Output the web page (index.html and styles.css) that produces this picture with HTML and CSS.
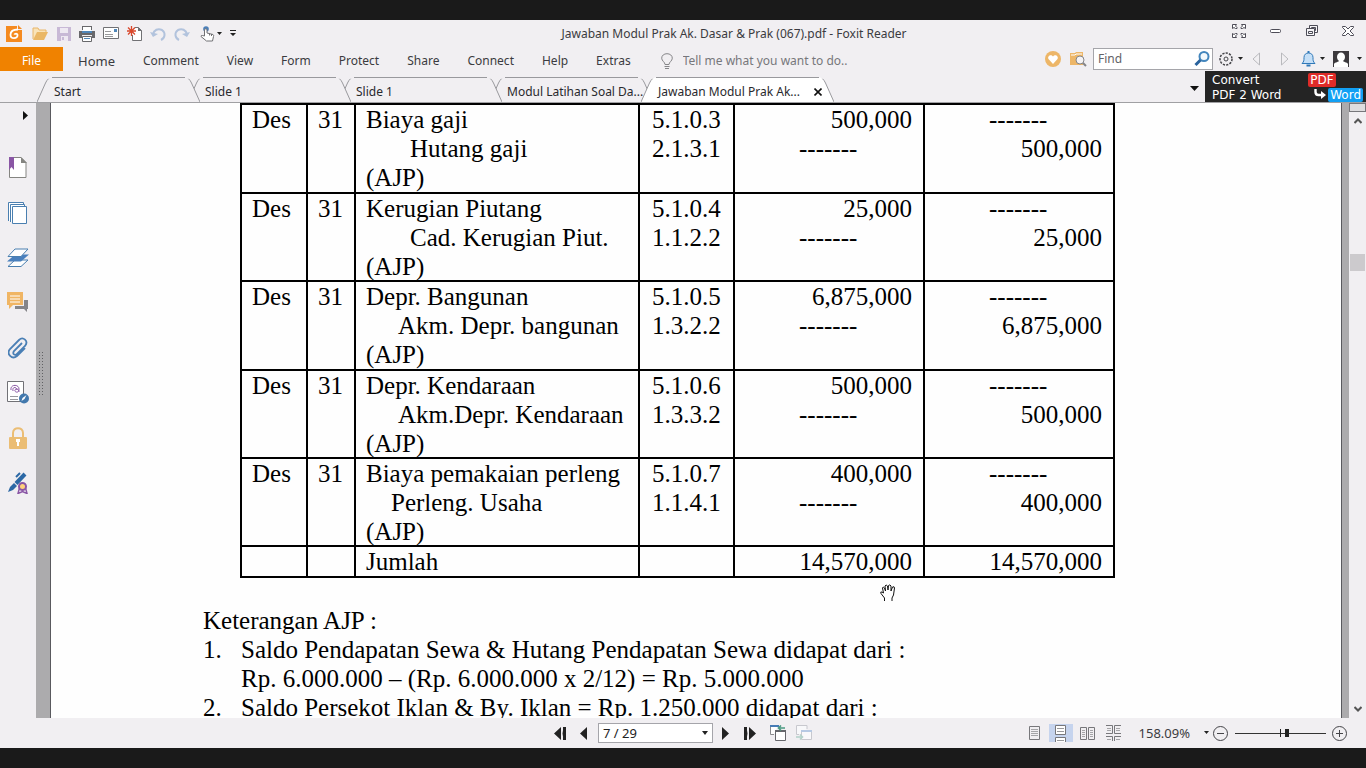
FILE: index.html
```html
<!DOCTYPE html>
<html lang="id">
<head>
<meta charset="utf-8">
<title>Jawaban Modul Prak Ak. Dasar &amp; Prak (067).pdf - Foxit Reader</title>
<link rel="stylesheet" href="styles.css">
</head>
<body>
<header class="titlebar">
  <div class="quick">
    <svg class="logo" width="17" height="17" viewBox="0 0 17 17"><path d="M0 1h11v4h5v12H0z" fill="#f58a1f"/><path d="M12 0l4 4h-4z" fill="#f58a1f"/><path d="M12 4.500C7.500 4.500 4.500 6.500 4.500 9.700c0 2.300 1.500 3.500 3.500 3.500 2.500 0 3.800-1.700 3.500-3.500-.4-1.500-2.500-1.500-3.200 0" fill="none" stroke="#fff" stroke-width="1.800"/></svg>
    <button aria-label="Open"><svg width="17" height="15" viewBox="0 0 17 15"><path d="M1 13V2h5l1 2h7v3" fill="#f9e3b8" stroke="#e8b66a"/><path d="M1 14l4-8h11l-4 8z" fill="#eab766"/></svg></button>
    <button aria-label="Save"><svg width="14" height="14" viewBox="0 0 14 14"><path d="M0 0h14v14H0z" fill="#c8b9d6"/><path d="M3 1h8v5H3zM4 9h7v5H4z" fill="#eee9f2"/><path d="M5 10h2v3H5z" fill="#c8b9d6"/></svg></button>
    <button aria-label="Print"><svg width="16" height="16" viewBox="0 0 16 16"><path d="M3 4V0h10v4M0 5h16v7h-3V9H3v3H0z" fill="#68686b"/><path d="M4 1h8v4H4z" fill="#fff"/><path d="M3 5h10v2H3z" fill="#5187b9"/><path d="M3.500 10.500h9v5h-9z" fill="#fff" stroke="#68686b"/><path d="M5 12.500h6" stroke="#5187b9"/></svg></button>
    <button aria-label="Email"><svg width="16" height="13" viewBox="0 0 16 13"><path d="M.5.5h15v11H.5z" fill="#fff" stroke="#717174"/><path d="M11 2h3v3h-3z" fill="#5187b9"/><path d="M2 4.500h6M2 7.500h8M2 9.500h8" stroke="#98989b"/></svg></button>
    <button aria-label="New"><svg width="15" height="15" viewBox="0 0 15 15"><path d="M5.500 9v5.500h9V4.500l-3-3H8" fill="#fff" stroke="#717174"/><path d="M11 1v4h4" fill="#717174"/><path d="M4.500 0v10M0 5h9M1 1.500l7 7M8 1.500l-7 7" stroke="#d9482c" stroke-width="1.300"/></svg></button>
    <button aria-label="Undo"><svg width="16" height="14" viewBox="0 0 16 14"><path d="M3 7c1-4 5-6 9-4 4 3 3 8-1 10" fill="none" stroke="#b2c3dd" stroke-width="2"/><path d="M0 5l3 5 5-3z" fill="#b2c3dd"/></svg></button>
    <button aria-label="Redo"><svg width="16" height="14" viewBox="0 0 16 14"><path d="M13 7c-1-4-5-6-9-4-4 3-3 8 1 10" fill="none" stroke="#b2c3dd" stroke-width="2"/><path d="M16 5l-3 5-5-3z" fill="#b2c3dd"/></svg></button>
    <button class="hand-tool" aria-label="Hand tool"><svg width="22" height="16" viewBox="0 0 22 16"><circle cx="6" cy="3" r="2.800" fill="#4b7fb8"/><path d="M4.500 10V3.500q1.500-1.500 2.500 0V7l6 1.500q1 .5.500 2L12.500 15h-6L1 10.500q0-1.500 1.500-1z" fill="#fff" stroke="#717174"/><path d="M9.500 7.500v2M11.500 8v2" stroke="#717174"/><path d="M17 6h5l-2.500 3z" fill="#222"/></svg></button>
    <button aria-label="Customize toolbar"><svg width="6" height="7" viewBox="0 0 6 7"><path d="M0 0h6v1H0zM0 3h6L3 6z" fill="#222"/></svg></button>
  </div>
  <h1 class="title">Jawaban Modul Prak Ak. Dasar &amp; Prak (067).pdf - Foxit Reader</h1>
  <div class="window-buttons">
    <button aria-label="Full screen"><svg width="14" height="14" viewBox="0 0 14 14" fill="#fff" stroke="#4e4d58"><path d="M.5.5h4l-1 1.500 1.500 1.500v1H3.500L2 3.500l-1.500 1zM13.500.5v4L12 3.500l-1.500 1H9v-1L10.500 2l-1-1.500zM.5 13.500v-4l1.500 1 1.500-1H5v1L3.500 12l1 1.500zM13.500 13.500v-4l-1.500 1-1.500-1H9v1l1.500 1.500-1 1.500z"/></svg></button>
    <button aria-label="Minimize"><svg width="12" height="14" viewBox="0 0 12 14"><rect x=".5" y="5.500" width="10" height="3" rx="1" fill="#fff" stroke="#4e4d58"/></svg></button>
    <button aria-label="Restore"><svg width="12" height="14" viewBox="0 0 12 14" fill="#f6f5f8" stroke="#4e4d58"><path d="M3.500 1.500h8v7h-8z"/><path d="M5.500 3.500h4v3h-4z"/><path d="M.5 4.500h8v7h-8z"/><path d="M2.500 7.500h4v2h-4z"/></svg></button>
    <button aria-label="Close"><svg width="12" height="14" viewBox="0 0 12 14"><path d="M.5 2.500h3L6 5l2.500-2.500h3v1L8 7l3.500 3.500v1h-3L6 9l-2.500 2.500h-3v-1L4 7 .5 3.500z" fill="#fff" stroke="#4e4d58"/></svg></button>
  </div>
</header>

<nav class="menubar">
  <button class="file">File</button>
  <div class="menus">
    <button class="home">Home</button>
    <button>Comment</button>
    <button>View</button>
    <button>Form</button>
    <button>Protect</button>
    <button>Share</button>
    <button>Connect</button>
    <button>Help</button>
    <button>Extras</button>
  </div>
  <label class="tell"><svg width="12" height="16" viewBox="0 0 12 16" fill="none" stroke="#858588"><path d="M4 11.500C4 9 .7 8 .7 5.200.7 2.500 3 .7 6 .7s5.300 1.800 5.300 4.500C11.300 8 8 9 8 11.500zM3.500 13.500h5M4 15.500h4"/></svg>
    <input type="text" placeholder="Tell me what you want to do.."></label>
  <div class="tools">
    <button aria-label="Favourites"><svg width="16" height="16" viewBox="0 0 16 16"><circle cx="8" cy="8" r="8" fill="#edb668"/><path d="M8 13L3.500 8C2 5 6 2.500 8 5.500 10 2.500 14 5 12.500 8z" fill="#fff"/></svg></button>
    <button class="folder-search" aria-label="Search folder"><svg width="17" height="16" viewBox="0 0 17 16"><path d="M0 2h5l1-1h7v13H0z" fill="#edb668"/><path d="M1 4h4l1-1h6" stroke="#fff" fill="none"/><circle cx="10" cy="9" r="4" fill="#f5f3f5" stroke="#858588"/><path d="M13 12l3 3" stroke="#858588" stroke-width="2"/></svg></button>
    <label class="find"><input type="text" placeholder="Find" aria-label="Find"><svg width="16" height="16" viewBox="0 0 16 16"><circle cx="10" cy="5.500" r="4.500" fill="#f3f9fd" stroke="#4386bd" stroke-width="2"/><path d="M6.500 9L1.500 14" stroke="#28629d" stroke-width="3"/></svg></label>
    <button class="gear" aria-label="Settings"><svg width="24" height="14" viewBox="0 0 24 14"><circle cx="7" cy="7" r="6" fill="none" stroke="#45454a" stroke-width="1.500" stroke-dasharray="2.200 1.200"/><circle cx="7" cy="7" r="2" fill="none" stroke="#45454a"/><path d="M19 5h5l-2.500 3z" fill="#222"/></svg></button>
    <button aria-label="Back"><svg width="8" height="14" viewBox="0 0 8 14"><path d="M7.500 1v12L1 7z" fill="none" stroke="#b9b9bd"/></svg></button>
    <button class="forward" aria-label="Forward"><svg width="8" height="14" viewBox="0 0 8 14"><path d="M.5 1v12L7 7z" fill="none" stroke="#b9b9bd"/></svg></button>
    <button class="bell" aria-label="Notifications"><svg width="24" height="16" viewBox="0 0 24 16"><path d="M1 12.500c2-2 2-3 2-6 0-3 2-4.500 4.500-4.500S12 3.500 12 6.500c0 3 0 4 2 6z" fill="#c5dff7" stroke="#2f78b8"/><path d="M7.500 0v2M5.500 14.500h4" stroke="#2f78b8" stroke-width="2"/><path d="M19 6h5l-2.500 3z" fill="#222"/></svg></button>
    <button class="account" aria-label="Account"><svg width="29" height="16" viewBox="0 0 29 16"><path d="M0 0h16v16H0z" fill="#3c393d"/><path d="M4 6c0-6 8-6 8 0 0 2-1 3-2 4 0 1 4 1 5 3v3H1v-3c1-2 5-2 5-3-1-1-2-2-2-4z" fill="#fff"/><path d="M24 6h5l-2.500 3z" fill="#222"/></svg></button>
  </div>
</nav>

<div class="tabbar">
  <div class="tabs">
    <button class="tab"><svg class="edge" width="15" height="25" viewBox="0 0 15 25"><path d="M0 25L8.500 6Q11 .5 15 .5V25z"/></svg><span>Start</span><svg class="edge" width="15" height="25" viewBox="0 0 15 25"><path d="M15 25L6.500 6Q4 .5 0 .5V25z"/></svg></button>
    <button class="tab"><svg class="edge" width="15" height="25" viewBox="0 0 15 25"><path d="M0 25L8.500 6Q11 .5 15 .5V25z"/></svg><span>Slide 1</span><svg class="edge" width="15" height="25" viewBox="0 0 15 25"><path d="M15 25L6.500 6Q4 .5 0 .5V25z"/></svg></button>
    <button class="tab"><svg class="edge" width="15" height="25" viewBox="0 0 15 25"><path d="M0 25L8.500 6Q11 .5 15 .5V25z"/></svg><span>Slide 1</span><svg class="edge" width="15" height="25" viewBox="0 0 15 25"><path d="M15 25L6.500 6Q4 .5 0 .5V25z"/></svg></button>
    <button class="tab"><svg class="edge" width="15" height="25" viewBox="0 0 15 25"><path d="M0 25L8.500 6Q11 .5 15 .5V25z"/></svg><span>Modul Latihan Soal Da...</span><svg class="edge" width="15" height="25" viewBox="0 0 15 25"><path d="M15 25L6.500 6Q4 .5 0 .5V25z"/></svg></button>
    <button class="tab active"><svg class="edge" width="15" height="25" viewBox="0 0 15 25"><path d="M0 25L8.500 6Q11 .5 15 .5V25z"/></svg><span>Jawaban Modul Prak Ak...<svg class="x" width="8" height="8" viewBox="0 0 8 8"><path d="M.5.5l7 7M7.500.5l-7 7" stroke="#111" stroke-width="1.600"/></svg></span><svg class="edge" width="15" height="25" viewBox="0 0 15 25"><path d="M15 25L6.500 6Q4 .5 0 .5V25z"/></svg></button>
  </div>
  <button class="tab-list" aria-label="List tabs"><svg width="9" height="5" viewBox="0 0 9 5"><path d="M0 0h9L4.500 5z" fill="#111"/></svg></button>
  <a class="ad" href="#"><span>Convert</span><b class="pdf">PDF</b><span>PDF 2 Word</span><span class="to"><svg width="12" height="11" viewBox="0 0 12 11"><path d="M1.500 0v3q0 3 3 3H8" fill="none" stroke="#fff" stroke-width="2.400"/><path d="M7 2l5 4-5 4z" fill="#fff"/></svg><b class="word">Word</b></span></a>
</div>

<main class="workspace">
  <aside class="panel">
    <button class="expand" aria-label="Expand panel"><svg width="6" height="9" viewBox="0 0 6 9"><path d="M0 0l5 4.500L0 9z" fill="#111"/></svg></button>
    <button aria-label="Bookmarks"><svg width="20" height="22" viewBox="0 0 20 22"><path d="M1.500.5H13l5 5v15H1.500z" fill="#fff" stroke="#858581"/><path d="M13 0v6h6z" fill="#858581"/><path d="M1 0h5v13l-2.500-3L1 13z" fill="#8a56a5"/></svg></button>
    <button aria-label="Pages"><svg width="20" height="22" viewBox="0 0 20 22" fill="#fff" stroke="#4a7fb0"><path d="M.5 19V.5h15V15"/><path d="M2.500 20V2.500h14V18"/><path d="M4.500 4.500h14v17h-14z"/></svg></button>
    <button aria-label="Layers"><svg width="22" height="20" viewBox="0 0 22 20"><path d="M1 18.500h13l7-6.500H8z" fill="#fff" stroke="#4a7fb0"/><path d="M0 13.500h14l8-7H8z" fill="#4a80bd"/><path d="M1 8.500h13L21 1H8z" fill="#fff" stroke="#4a7fb0"/></svg></button>
    <button aria-label="Comments"><svg width="22" height="21" viewBox="0 0 22 21"><path d="M17 8h4v9h-1v3l-3-3h-9v-3h9z" fill="#858589"/><path d="M0 0h16v13H6l-4 4v-4H0z" fill="#f0b564"/><path d="M3 4h10M3 7h10M3 10h10" stroke="#fff"/></svg></button>
    <button aria-label="Attachments"><svg width="20" height="22" viewBox="0 0 20 22" fill="none" stroke="#4a7fb5" stroke-width="1.800"><path d="M14 6L6 14c-2 3 1 5 3 3l8-8c4-5-2-10-6-6l-9 9c-4 5 2 11 7 7l8-8"/></svg></button>
    <button aria-label="Signatures"><svg width="22" height="23" viewBox="0 0 22 23"><path d="M.5.500h16v20H.5z" fill="#fff" stroke="#717176"/><path d="M4 9c-1-6 8-6 8-1s-5 3-4 1 4-1 4 2M6 10c-1-5 4-4 4-1" fill="none" stroke="#8a56a5"/><path d="M3 15.500h8M3 18.500h8" stroke="#99999e"/><circle cx="17" cy="17.500" r="5" fill="#4278ad"/><path d="M14.500 20l1-3 4-3-2 4z" fill="#fff"/></svg></button>
    <button aria-label="Security"><svg width="18" height="22" viewBox="0 0 18 22"><path d="M4 10V6c0-6.500 10-6.500 10 0v4" fill="none" stroke="#ebbd74" stroke-width="2"/><rect y="10" width="18" height="12" rx="1" fill="#ebbd74"/><path d="M7 12h4v3h-1v4H8v-4H7z" fill="#fff"/></svg></button>
    <button aria-label="Digital signatures"><svg width="20" height="22" viewBox="0 0 20 22"><path d="M0 20l2-5 4-4 3 3-4 4z" fill="#2c68a5"/><path d="M8 11.500L17 2" stroke="#2c68a5" stroke-width="4"/><path d="M8 5l4-4" stroke="#2c68a5" stroke-width="2"/><path d="M11.500 16L10 21.500l4.500-2 4.500 2-1.500-5.500" fill="#fff" stroke="#8a56a5" stroke-width="1.500"/><circle cx="14.500" cy="14.500" r="3.500" fill="#ffd27c" stroke="#8a56a5" stroke-width="2"/></svg></button>
  </aside>
  <div class="gutter"><svg width="4" height="44" viewBox="0 0 4 44"><path d="M.5 0v44M3.500 0v44" stroke="#606063" stroke-dasharray="1 2"/></svg></div>
  <article class="sheet">
    <table class="journal">
      <colgroup><col class="c-month"><col class="c-day"><col class="c-name"><col class="c-ref"><col><col></colgroup>
      <tbody>
      <tr><td>Des</td><td>31</td><td><p>Biaya gaji</p><p class="in-3">Hutang gaji</p><p>(AJP)</p></td><td class="ref"><p>5.1.0.3</p><p>2.1.3.1</p></td><td><p class="num">500,000</p><p class="dash">-------</p></td><td><p class="dash">-------</p><p class="num">500,000</p></td></tr>
      <tr><td>Des</td><td>31</td><td><p>Kerugian Piutang</p><p class="in-3">Cad. Kerugian Piut.</p><p>(AJP)</p></td><td class="ref"><p>5.1.0.4</p><p>1.1.2.2</p></td><td><p class="num">25,000</p><p class="dash">-------</p></td><td><p class="dash">-------</p><p class="num">25,000</p></td></tr>
      <tr><td>Des</td><td>31</td><td><p>Depr. Bangunan</p><p class="in-2">Akm. Depr. bangunan</p><p>(AJP)</p></td><td class="ref"><p>5.1.0.5</p><p>1.3.2.2</p></td><td><p class="num">6,875,000</p><p class="dash">-------</p></td><td><p class="dash">-------</p><p class="num">6,875,000</p></td></tr>
      <tr><td>Des</td><td>31</td><td><p>Depr. Kendaraan</p><p class="in-2">Akm.Depr. Kendaraan</p><p>(AJP)</p></td><td class="ref"><p>5.1.0.6</p><p>1.3.3.2</p></td><td><p class="num">500,000</p><p class="dash">-------</p></td><td><p class="dash">-------</p><p class="num">500,000</p></td></tr>
      <tr><td>Des</td><td>31</td><td><p>Biaya pemakaian perleng</p><p class="in-1">Perleng. Usaha</p><p>(AJP)</p></td><td class="ref"><p>5.1.0.7</p><p>1.1.4.1</p></td><td><p class="num">400,000</p><p class="dash">-------</p></td><td><p class="dash">-------</p><p class="num">400,000</p></td></tr>
      <tr class="total"><td></td><td></td><td>Jumlah</td><td></td><td class="num">14,570,000</td><td class="num">14,570,000</td></tr>
      </tbody>
    </table>
    <section class="notes">
      <p>Keterangan AJP :</p>
      <div class="note"><span>1.</span><p>Saldo Pendapatan Sewa &amp; Hutang Pendapatan Sewa didapat dari :<br>Rp. 6.000.000 – (Rp. 6.000.000 x 2/12) = Rp. 5.000.000</p></div>
      <div class="note"><span>2.</span><p>Saldo Persekot Iklan &amp; By. Iklan = Rp. 1.250.000 didapat dari :</p></div>
    </section>
    <svg class="cursor" width="17" height="18" viewBox="0 0 17 18"><path d="M4.500 17v-3L1 9.500q-1-2 1-1.500l1.500 1L2.500 4q.5-2 2 0l1 3-.5-5q1-2 2.500 0l.5 4 .5-4.500q1.500-1.500 2.500.5v5l1.500-4q2-1 2 1l-1 7-1.500 3v3" fill="#fff" stroke="#111"/></svg>
  </article>
  <div class="scroll">
    <span class="split"></span>
    <button aria-label="Scroll up"><svg width="8" height="6" viewBox="0 0 8 6"><path d="M.5 5L4 1.500 7.500 5" fill="none" stroke="#555" stroke-width="2"/></svg></button>
    <span class="track"><span class="thumb"></span></span>
    <button aria-label="Scroll down"><svg width="8" height="6" viewBox="0 0 8 6"><path d="M.5 1L4 4.500 7.500 1" fill="none" stroke="#555" stroke-width="2"/></svg></button>
  </div>
</main>

<footer class="status">
  <div class="pager">
    <button aria-label="First page"><svg width="12" height="13" viewBox="0 0 12 13"><path d="M7 0v13L0 6.500zM12 0v13h-3V9.500L8 6.500l1-3V0z" fill="#222"/><path d="M8 1v11" stroke="#f1eff2"/></svg></button>
    <button aria-label="Previous page"><svg width="7" height="13" viewBox="0 0 7 13"><path d="M7 0v13L0 6.500z" fill="#222"/></svg></button>
    <span class="page-box"><select aria-label="Page"><option>7 / 29</option></select><svg width="6" height="4" viewBox="0 0 6 4"><path d="M0 0h6L3 4z" fill="#222"/></svg></span>
    <button aria-label="Next page"><svg width="7" height="13" viewBox="0 0 7 13"><path d="M0 0v13l7-6.500z" fill="#222"/></svg></button>
    <button class="last" aria-label="Last page"><svg width="12" height="13" viewBox="0 0 12 13"><path d="M5 0v13l7-6.500zM0 0h3v3.500l1 3-1 3V13H0z" fill="#222"/><path d="M4 1v11" stroke="#f1eff2"/></svg></button>
    <button aria-label="Previous view"><svg width="16" height="16" viewBox="0 0 16 16"><path d="M8 .5H.5v9H4" fill="#fff" stroke="#8b8b8e"/><path d="M0 0h9v2H0z" fill="#477cb6"/><path d="M5.500 5.500h10v10h-10z" fill="#fff" stroke="#66666b"/><path d="M5 5h11v2H5z" fill="#66666b"/><path d="M9 3h6M11 .5L8.500 3 11 5.500" stroke="#4b9a82" fill="none" stroke-width="1.600"/></svg></button>
    <button class="next-view" aria-label="Next view"><svg width="16" height="16" viewBox="0 0 16 16"><path d="M11 4V.5H.5v9H3" fill="#f8f8fa" stroke="#c8c8ce"/><path d="M5.500 5.500h10v9h-10z" fill="#f8f8fa" stroke="#c8c8ce"/><path d="M5 5h11v2H5z" fill="#b6c9e3"/><path d="M0 12h6M4 9.500L6.500 12 4 14.500" stroke="#b3d1c9" fill="none" stroke-width="1.600"/></svg></button>
  </div>
  <div class="view">
    <button class="single" aria-label="Single page"><svg width="11" height="14" viewBox="0 0 11 14" fill="none" stroke="#77777b"><path d="M.5.5h10v13H.5z"/><path d="M2 3.500h7M2 5.500h7M2 7.500h7M2 9.500h7" stroke="#a5a5a8"/></svg></button>
    <button class="selected" aria-label="Continuous"><svg width="11" height="17" viewBox="0 0 11 17"><path d="M.5.500h10v9H.5zM.5 17v-4.500h10V17" fill="#fff" stroke="#77777b"/><path d="M2 3.500h7M2 6.500h7M2 15.500h7" stroke="#99999c"/></svg></button>
    <button class="facing" aria-label="Facing"><svg width="15" height="13" viewBox="0 0 15 13" fill="none" stroke="#77777b"><path d="M.5.5h6v12h-6zM8.500.5h6v12h-6z"/><path d="M2 3.500h3M2 5.500h3M2 7.500h3M2 9.500h3M10 3.500h3M10 5.500h3M10 7.500h3M10 9.500h3" stroke="#a5a5a8"/></svg></button>
    <button class="facing-cont" aria-label="Continuous facing"><svg width="15" height="16" viewBox="0 0 15 16" fill="none" stroke="#77777b"><path d="M0 .5h6.500v8H0M15 .5H8.500v8H15M0 11.500h6.500V16M15 11.500H8.500V16"/><path d="M1 3.500h4M1 5.500h4M10 3.500h4M10 5.500h4M1 14.500h4M10 14.500h4" stroke="#a5a5a8"/></svg></button>
    <button class="percent">158.09%<svg width="5" height="4" viewBox="0 0 5 4"><path d="M0 0h5L2.500 3z" fill="#222"/></svg></button>
    <button class="minus" aria-label="Zoom out"><svg width="15" height="15" viewBox="0 0 15 15" fill="none" stroke="#444448"><circle cx="7.500" cy="7.500" r="7"/><path d="M4 7.500h7"/></svg></button>
    <input class="zoom" type="range" min="0" max="100" value="58" aria-label="Zoom">
    <button aria-label="Zoom in"><svg width="15" height="15" viewBox="0 0 15 15" fill="none" stroke="#444448"><circle cx="7.500" cy="7.500" r="7"/><path d="M4 7.500h7M7.500 4v7"/></svg></button>
  </div>
</footer>
</body>
</html>
```
FILE: styles.css
```css
* { box-sizing: border-box; }
body {
  margin: 0;
  height: 100vh;
  display: flex;
  flex-direction: column;
  padding: 20px 0;
  overflow: hidden;
  background: #1a1a1a;
  color: #3b3b40;
  font: 12px/16px "Noto Sans", "Open Sans", sans-serif;
}
p { margin: 0; }
svg { display: block; flex: none; }
button {
  display: flex;
  align-items: center;
  padding: 0;
  border: 0;
  background: none;
  color: inherit;
  font: inherit;
  white-space: nowrap;
}
input, select { font: inherit; color: inherit; }

.titlebar { display: flex; height: 27px; background: #f1eff2; }
.quick { display: flex; align-items: center; gap: 8px; padding-left: 6px; width: 236px; }
.logo { margin-right: 1px; }
.hand-tool { margin-left: 2px; }
.title { flex: 1; margin: 0; font-size: 12px; line-height: 27px; font-weight: 400; text-align: center; }
.window-buttons { display: flex; align-items: flex-start; gap: 24px; padding: 4px 12px 0 0; }

.menubar { display: flex; height: 24px; background: #f1eff2; }
.file { width: 63px; justify-content: center; padding-top: 3px; background: #f08200; color: #fff; }
.menus { display: flex; gap: 28px; padding: 3px 0 0 15px; }
.home { font-size: 13px; }
.tell { display: flex; align-items: center; gap: 10px; margin-left: 30px; padding-top: 3px; }
.tell input { width: 180px; padding: 0; border: 0; background: none; outline: none; }
.tell input::placeholder { color: #77777b; }
.tools { display: flex; align-items: center; margin-left: auto; padding-right: 4px; }
.folder-search { margin-left: 9px; }
.find {
  display: flex;
  align-items: center;
  width: 120px;
  height: 22px;
  margin: 0 6px;
  padding: 0 2px 0 4px;
  border: 1px solid #a5a5aa;
  background: #fff;
}
.find input { flex: 1; min-width: 0; padding: 0; border: 0; outline: none; background: none; }
.find input::placeholder { color: #626267; }
.gear { margin-right: 9px; }
.forward { margin: 0 12px 0 21px; }
.account { margin-left: 8px; }

.tabbar { display: flex; align-items: flex-end; height: 32px; border-bottom: 1px solid #a0a0a3; background: #f1eff2; }
.tabs { display: flex; padding-left: 37px; isolation: isolate; }
.tab { position: relative; width: 163px; height: 25px; margin-right: -12px; color: #29292d; }
.tab:nth-child(1) { z-index: 4; }
.tab:nth-child(2) { z-index: 3; }
.tab:nth-child(3) { z-index: 2; }
.tab:nth-child(4) { z-index: 1; }
.tab span {
  position: relative;
  z-index: 1;
  display: flex;
  flex: 1;
  align-items: center;
  justify-content: space-between;
  min-width: 0;
  height: 25px;
  padding: 4px 0 0 2px;
  border-top: 1px solid #99999d;
  background: #f1eff2;
}
.edge { fill: #f1eff2; }
.edge path { stroke: #99999d; stroke-dasharray: 26 200; }
.tab.active { z-index: 5; width: 193px; }
.tab.active span { background: #fff; }
.tab.active .edge { fill: #fff; }
.x { margin-right: -3px; }
.tab-list { height: 31px; margin-left: auto; padding: 4px 6px 0 0; }
.ad {
  display: grid;
  grid-template-columns: 1fr auto;
  grid-template-rows: 15px 15px;
  align-items: center;
  width: 161px;
  height: 31px;
  padding: 1px 3px 0 7px;
  background: #242424;
  color: #fff;
  font: 12px/14px "DejaVu Sans", sans-serif;
  text-decoration: none;
}
.ad b { font-weight: 400; border-radius: 2px; padding: 0 2px; line-height: 14px; }
.pdf { justify-self: start; background: #df2b28; }
.ad .pdf { margin-left: -6px; }
.to { display: flex; align-items: center; gap: 2px; }
.word { background: #12a0f4; }

.workspace { flex: 1; min-height: 0; display: flex; background: #acabad; }
.panel { display: flex; flex-direction: column; width: 36px; background: #f1eff2; }
.panel button { justify-content: center; height: 45px; }
.panel .expand { height: 24px; margin-bottom: 18px; padding-left: 15px; }
.gutter { display: flex; align-items: flex-start; width: 14px; padding: 249px 0 0 3px; }
.sheet {
  position: relative;
  flex: 1;
  min-width: 0;
  margin-right: 7px;
  padding: 0 226px 0 152px;
  overflow: hidden;
  border: solid #59595e;
  border-width: 0 1px;
  background: #fefefe;
  color: #000;
  font: 25px/29px "Liberation Serif", serif;
}
.journal { width: calc(100% - 37px); margin-left: 37px; table-layout: fixed; border-collapse: collapse; }
.c-month { width: 66px; }
.c-day { width: 48px; }
.c-name { width: 284px; }
.c-ref { width: 95px; }
.journal td { height: 88px; padding: 0 11px 0 10px; border: 2px solid #000; vertical-align: top; white-space: nowrap; }
.journal tr:first-child td, .journal tr:nth-child(3) td { height: 89px; }
.journal p { height: 29px; }
.journal p:nth-child(3) { height: 28px; }
.journal .total td { height: 30px; }
.journal .ref { padding-left: 12px; }
.num { text-align: right; }
.dash { padding-left: 54px; }
.in-1 { padding-left: 25px; }
.in-2 { padding-left: 32px; }
.in-3 { padding-left: 44px; }
.notes { padding-top: 28px; white-space: nowrap; }
.note { display: grid; grid-template-columns: 38px 1fr; }
.cursor { position: absolute; left: 829px; top: 481px; }

.scroll { display: flex; flex-direction: column; align-items: center; width: 17px; background: #f1eff2; }
.split { width: 17px; height: 9px; border: 1px solid #77777b; background: #dedddf; }
.scroll button { height: 18px; }
.track { flex: 1; width: 15px; padding-top: 124px; }
.thumb { display: block; height: 17px; background: #cccacd; }

.status {
  display: grid;
  grid-template-columns: 1fr auto 1fr;
  height: 30px;
  background: #f1eff2;
}
.pager { grid-column: 2; display: flex; align-items: center; gap: 14px; }
.page-box { display: flex; align-items: center; width: 115px; height: 20px; padding: 0 4px; border: 1px solid #a5a5aa; background: #fff; margin: 0 -5px 0 -3px; font-size: 13px; }
.page-box select { flex: 1; appearance: none; padding: 0; border: 0; background: none; color: #222; }
.last { margin-left: 1px; }
.next-view { margin-left: -4px; }
.view { display: flex; align-items: center; justify-content: flex-end; padding-right: 19px; }
.selected { justify-content: center; width: 24px; height: 18px; margin: 0 7px 0 9px; background: #c6d4ee; }
.facing-cont { margin: 0 18px 0 11px; }
.percent { gap: 14px; font-size: 13px; }
.minus { margin: 0 7px 0 4px; }
.zoom {
  appearance: none;
  width: 91px;
  height: 8px;
  margin: 0 6px 0 0;
  background:
    linear-gradient(#222, #222) 45px 0 / 1px 8px no-repeat,
    linear-gradient(#333, #333) 0 4px / 100% 1px no-repeat;
}
.zoom::-webkit-slider-thumb { appearance: none; width: 4px; height: 8px; background: #222; }
```
